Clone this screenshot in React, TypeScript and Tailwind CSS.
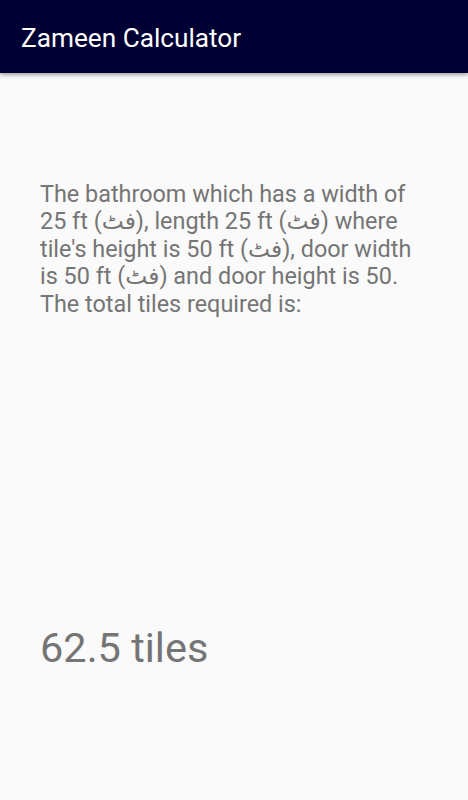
export default function App() {
  return (
    <div className="min-h-[800px] w-full bg-[#fafafa] font-['Roboto','DejaVu_Sans',sans-serif]">
      <header className="flex h-[73px] items-center bg-[#000033] px-[21px] pt-[4px] shadow-[0_2px_4px_rgba(0,0,0,0.35)]">
        <h1 className="text-[26.2px] leading-none text-white">Zameen Calculator</h1>
      </header>
      <main className="flex flex-col px-[40px]">
        <p className="mt-[108px] text-[23.4px] leading-[27.4px] text-[#757575]">
          The bathroom which has a width of 25 ft (فٹ), length 25 ft (فٹ) where tile's height is 50 ft (فٹ), door width is 50 ft (فٹ) and door height is 50. The total tiles required is:
        </p>
        <p className="mt-[307px] text-[41.5px] leading-[46px] text-[#757575]">62.5 tiles</p>
      </main>
    </div>
  );
}
